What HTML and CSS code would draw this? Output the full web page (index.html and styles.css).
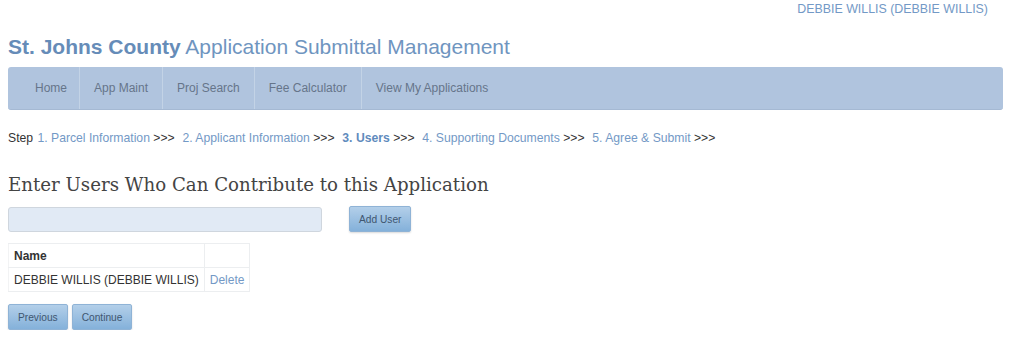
FILE: index.html
```html
<!DOCTYPE html>
<html lang="en">
<head>
  <meta charset="UTF-8" />
  <title>St. Johns County Application Submittal Management</title>
  <link rel="stylesheet" href="styles.css">
</head>
<body>
  <div class="user-bar">
    <a href="#">DEBBIE WILLIS (DEBBIE WILLIS)</a>
  </div>

  <header>
    <h1><strong>St. Johns County</strong> Application Submittal Management</h1>
  </header>

  <nav class="main-nav">
    <ul>
      <li><a href="#">Home</a></li>
      <li><a href="#">App Maint</a></li>
      <li><a href="#">Proj Search</a></li>
      <li><a href="#">Fee Calculator</a></li>
      <li><a href="#">View My Applications</a></li>
    </ul>
  </nav>

  <div class="steps">
    Step <a href="#">1. Parcel Information</a> &gt;&gt;&gt;&nbsp;
    <a href="#">2. Applicant Information</a> &gt;&gt;&gt;&nbsp;
    <a href="#" class="current">3. Users</a> &gt;&gt;&gt;&nbsp;
    <a href="#">4. Supporting Documents</a> &gt;&gt;&gt;&nbsp;
    <a href="#">5. Agree &amp; Submit</a> &gt;&gt;&gt;
  </div>

  <h2>Enter Users Who Can Contribute to this Application</h2>

  <div class="add-row">
    <input type="text" class="user-input">
    <button class="btn">Add User</button>
  </div>

  <table class="users">
    <tr>
      <th>Name</th>
      <th></th>
    </tr>
    <tr>
      <td>DEBBIE WILLIS (DEBBIE WILLIS)</td>
      <td><a href="#">Delete</a></td>
    </tr>
  </table>

  <div class="actions">
    <button class="btn">Previous</button>
    <button class="btn">Continue</button>
  </div>
</body>
</html>
```

FILE: styles.css
```css
body {
  font-family: "Liberation Sans", Arial, sans-serif;
  font-size: 12px;
  color: #333;
  background: #fff;
  margin: 0;
  padding: 0 8px;
}
a {
  color: #7399c6;
  text-decoration: none;
}
.user-bar {
  text-align: right;
  padding: 1px 28px 0 0;
  height: 16px;
  line-height: 16px;
}
.user-bar a {
  font-size: 12.4px;
  color: #7399c6;
}
header h1 {
  margin: 14px 0 0;
  font-size: 21px;
  font-weight: normal;
  line-height: 32px;
  color: #6f95c0;
}
header h1 strong {
  font-weight: bold;
  color: #668cb8;
}
.main-nav {
  margin-top: 4px;
  margin-right: 13px;
  background: #b0c4de;
  border-radius: 3px;
  height: 42px;
  border-bottom: 1px solid #a5b9d3;
}
.main-nav ul {
  list-style: none;
  margin: 0;
  padding: 0 0 0 14px;
  display: flex;
  height: 100%;
}
.main-nav li {
  display: flex;
  align-items: center;
  padding: 0 14px;
}
.main-nav li:first-child {
  padding-left: 13px;
  padding-right: 12px;
}
.main-nav li + li {
  border-left: 1px solid #c3d3e6;
}
.main-nav a {
  color: #66758a;
  font-size: 12px;
}
.steps {
  margin-top: 20px;
  line-height: 16px;
  font-size: 12.2px;
  color: #333;
}
.steps a {
  margin-left: 1px;
}
.steps a.current {
  font-weight: bold;
  color: #5f8bbd;
}
h2 {
  font-family: Georgia, "DejaVu Serif", serif;
  font-weight: normal;
  font-size: 18.2px;
  color: #444;
  margin: 26px 0 0;
  line-height: 26px;
}
.add-row {
  display: flex;
  align-items: center;
  gap: 27px;
  margin-top: 8px;
}
.user-input {
  width: 314px;
  height: 25px;
  box-sizing: border-box;
  background: #e1eaf5;
  border: 1px solid #cfd6de;
  border-radius: 3px;
  margin: 0;
}
.btn {
  font-family: inherit;
  font-size: 10.2px;
  color: #3f5670;
  height: 26px;
  padding: 0 9px;
  border: 1px solid #8fb3d6;
  border-radius: 2px;
  background: linear-gradient(#b3cfe9, #84b1da);
  box-shadow: 0 1px 2px rgba(0, 0, 0, 0.15);
  cursor: pointer;
}
.users {
  margin-top: 11px;
  border-collapse: collapse;
}
.users th,
.users td {
  border: 1px solid #eceef0;
  padding: 0 5px;
  height: 23px;
  text-align: left;
  font-size: 12px;
}
.users th {
  font-weight: bold;
  color: #333;
}
.users td {
  color: #333;
}
.users th:first-child,
.users td:first-child {
  border-left: 1px solid #f2f3f4;
}
.actions {
  display: flex;
  gap: 4px;
  margin-top: 12px;
}
```
